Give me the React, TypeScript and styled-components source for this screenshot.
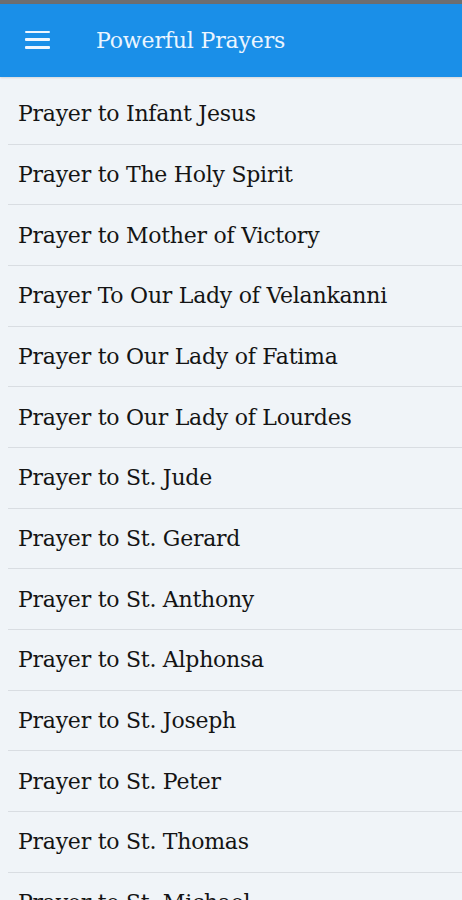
import React from "react";
import styled, { createGlobalStyle } from "styled-components";

const Global = createGlobalStyle`
  html, body { margin: 0; padding: 0; background: #f0f4f8; }
  body { font-family: "DejaVu Serif", "Liberation Serif", serif; overflow: hidden; }
`;

const Page = styled.div`
  width: 462px;
  height: 900px;
  display: flex;
  flex-direction: column;
  background: #f0f4f8;
  overflow: hidden;
`;

const StatusStrip = styled.div`
  height: 4px;
  background: #6d6e70;
  flex: none;
`;

const Toolbar = styled.header`
  height: 73px;
  flex: none;
  background: #1a8fe8;
  display: flex;
  align-items: center;
  padding-left: 25px;
  gap: 46px;
  box-shadow: 0 1px 2px rgba(0, 0, 0, 0.12);
`;

const MenuButton = styled.div`
  width: 25px;
  height: 18px;
  display: flex;
  flex-direction: column;
  justify-content: space-between;
  margin-top: -2px;
`;

const MenuBar = styled.span`
  display: block;
  height: 2.5px;
  background: #eef6ff;
  border-radius: 1px;
`;

const Title = styled.h1`
  margin: 0;
  font-family: "DejaVu Serif", serif;
  font-weight: normal;
  font-size: 22px;
  color: #eaf5ff;
  letter-spacing: -0.15px;
`;

const List = styled.ul`
  list-style: none;
  margin: 0;
  padding: 7px 0 0 8px;
`;

const Row = styled.li`
  height: 59.67px;
  border-bottom: 1px solid #d9dde2;
  display: flex;
  align-items: center;
  padding-left: 10px;
  font-size: 22px;
  color: #141414;
  letter-spacing: -0.25px;
  white-space: nowrap;
`;

const prayers = [
  "Prayer to Infant Jesus",
  "Prayer to The Holy Spirit",
  "Prayer to Mother of Victory",
  "Prayer To Our Lady of Velankanni",
  "Prayer to Our Lady of Fatima",
  "Prayer to Our Lady of Lourdes",
  "Prayer to St. Jude",
  "Prayer to St. Gerard",
  "Prayer to St. Anthony",
  "Prayer to St. Alphonsa",
  "Prayer to St. Joseph",
  "Prayer to St. Peter",
  "Prayer to St. Thomas",
  "Prayer to St. Michael",
];

export default function App() {
  return (
    <>
      <Global />
      <Page>
        <StatusStrip />
        <Toolbar>
          <MenuButton>
            <MenuBar />
            <MenuBar />
            <MenuBar />
          </MenuButton>
          <Title>Powerful Prayers</Title>
        </Toolbar>
        <List>
          {prayers.map((p) => (
            <Row key={p}>{p}</Row>
          ))}
        </List>
      </Page>
    </>
  );
}
